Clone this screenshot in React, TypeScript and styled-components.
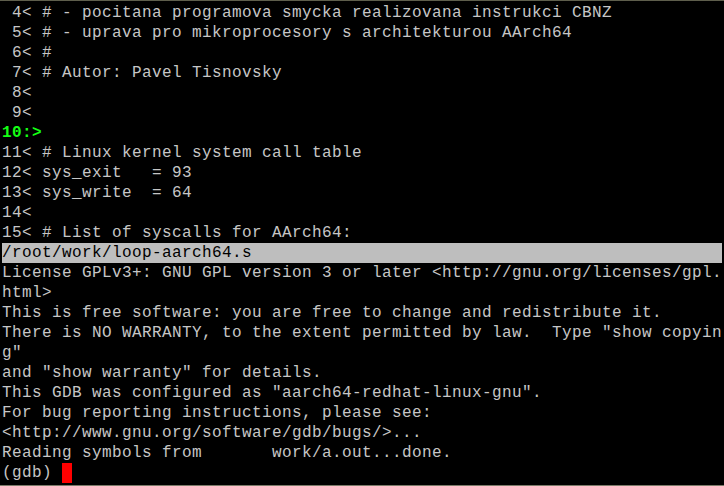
import React from "react";
import styled, { createGlobalStyle, css } from "styled-components";

const Global = createGlobalStyle`
  html, body { margin: 0; padding: 0; background: #000; }
  body { width: 724px; height: 486px; overflow: hidden; }
`;

const Screen = styled.div`
  box-sizing: border-box;
  width: 724px;
  height: 486px;
  background: #000;
  border-top: 1px solid #5e5e4c;
  border-bottom: 1px solid #7a7a68;
  padding: 2px 2px 0 2px;
  display: flex;
  flex-direction: column;
  font-family: "Liberation Mono", "DejaVu Sans Mono", monospace;
  font-size: 16px;
  letter-spacing: 0.4px;
  color: #c6c6c6;
`;

type Kind = "normal" | "current" | "status";

const Line = styled.div<{ $kind?: Kind }>`
  height: 20px;
  line-height: 20px;
  white-space: pre;
  width: 720px;
  ${(p) =>
    p.$kind === "current" &&
    css`
      color: #14ff14;
      font-weight: bold;
    `}
  ${(p) =>
    p.$kind === "status" &&
    css`
      background: #bebebe;
      color: #000;
    `}
`;

const Cursor = styled.span`
  display: inline-block;
  width: 10px;
  height: 20px;
  background: #ff0000;
  vertical-align: top;
`;

const lines: { text: string; kind?: Kind }[] = [
  { text: " 4< # - pocitana programova smycka realizovana instrukci CBNZ" },
  { text: " 5< # - uprava pro mikroprocesory s architekturou AArch64" },
  { text: " 6< #" },
  { text: " 7< # Autor: Pavel Tisnovsky" },
  { text: " 8<" },
  { text: " 9<" },
  { text: "10:>", kind: "current" },
  { text: "11< # Linux kernel system call table" },
  { text: "12< sys_exit   = 93" },
  { text: "13< sys_write  = 64" },
  { text: "14<" },
  { text: "15< # List of syscalls for AArch64:" },
  { text: "/root/work/loop-aarch64.s", kind: "status" },
  { text: "License GPLv3+: GNU GPL version 3 or later <http://gnu.org/licenses/gpl." },
  { text: "html>" },
  { text: "This is free software: you are free to change and redistribute it." },
  { text: 'There is NO WARRANTY, to the extent permitted by law.  Type "show copyin' },
  { text: 'g"' },
  { text: 'and "show warranty" for details.' },
  { text: 'This GDB was configured as "aarch64-redhat-linux-gnu".' },
  { text: "For bug reporting instructions, please see:" },
  { text: "<http://www.gnu.org/software/gdb/bugs/>..." },
  { text: "Reading symbols from       work/a.out...done." },
];

export default function App() {
  return (
    <>
      <Global />
      <Screen>
        {lines.map((l, i) => (
          <Line key={i} $kind={l.kind}>
            {l.text}
          </Line>
        ))}
        <Line>
          {"(gdb) "}
          <Cursor />
        </Line>
      </Screen>
    </>
  );
}
